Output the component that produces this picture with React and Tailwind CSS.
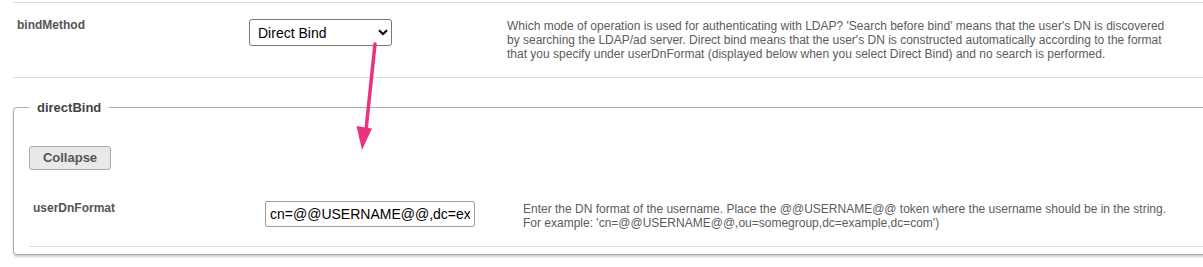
import React from "react";

function Row({ label, control, desc, className = "" }) {
  return (
    <div className={`flex border-b border-[#ddd] pt-[15px] pb-[16px] ${className}`}>
      <div className="w-[236px] shrink-0 pl-[4px] text-[12px] font-bold leading-[14px] text-[#555]">
        {label}
      </div>
      <div className="w-[258px] shrink-0">{control}</div>
      <div className="mt-[1px] w-[660px] shrink-0 text-[12px] leading-[14px] text-[#5c5c5c]">
        {desc}
      </div>
    </div>
  );
}

export default function App() {
  return (
    <div className="relative h-[267px] w-[1203px] overflow-hidden bg-white font-['Liberation_Sans',Arial,sans-serif]">
      <div className="w-[1230px] pl-[13px] pt-[2px]">
        <Row
          className="border-t"
          label="bindMethod"
          control={
            <div className="relative mt-[1px] h-[27px] w-[143px]">
              <select
                defaultValue="direct"
                className="h-[27px] w-[143px] appearance-none rounded-[3px] border border-[#767676] bg-white pl-[8px] text-[14px] leading-[16px] text-black outline-none"
              >
                <option value="search">Search before bind</option>
                <option value="direct">Direct Bind</option>
              </select>
              <svg
                className="pointer-events-none absolute left-[129px] top-[10px]"
                width="10"
                height="7"
                viewBox="0 0 10 7"
              >
                <path d="M1 1.2 L5 5 L9 1.2" fill="none" stroke="#000" strokeWidth="2" />
              </svg>
            </div>
          }
          desc={
            <>
              Which mode of operation is used for authenticating with LDAP? 'Search before bind' means that the user's DN is discovered by searching the LDAP/ad server. Direct bind means that the user's DN is constructed automatically according to the format that you specify under userDnFormat (displayed below when you select Direct Bind) and no search is performed.
            </>
          }
        />

        <fieldset className="mt-[22px] rounded-[4px] border border-[#aaa] pb-[7px] pl-[15px] shadow-[0_2px_2px_rgba(0,0,0,0.18)]">
          <legend className="px-[8px] text-[13px] font-bold leading-[15px] text-[#444]">
            directBind
          </legend>
          <div className="pt-[30px]">
            <button className="h-[24px] w-[82px] rounded-[3px] border border-[#aaa] bg-[#e9e9e9] text-[13px] font-bold text-[#555]">
              Collapse
            </button>
          </div>
          <Row
            className="mt-[16px]"
            label="userDnFormat"
            control={
              <input
                type="text"
                defaultValue="cn=@@USERNAME@@,dc=example,dc=com"
                className="h-[26px] w-[210px] rounded-[2px] border border-[#a0a0a0] bg-white px-[4px] text-[14px] text-black outline-none"
              />
            }
            desc={
              <>
                Enter the DN format of the username. Place the @@USERNAME@@ token where the username should be in the string. For example: 'cn=@@USERNAME@@,ou=somegroup,dc=example,dc=com')
              </>
            }
          />
        </fieldset>
      </div>

      <svg
        className="pointer-events-none absolute left-0 top-0"
        width="1203"
        height="267"
        viewBox="0 0 1203 267"
      >
        <line x1="375" y1="44" x2="366" y2="130" stroke="#ea3380" strokeWidth="3.5" strokeLinecap="round" />
        <polygon points="356.5,126 372,128.5 362,150" fill="#ea3380" />
      </svg>
    </div>
  );
}
